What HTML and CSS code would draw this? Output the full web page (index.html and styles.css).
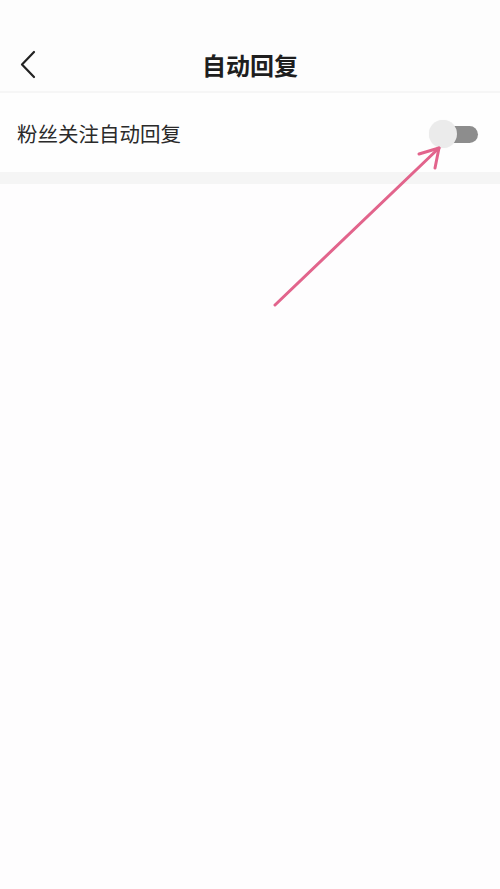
FILE: index.html
```html
<!DOCTYPE html>
<html lang="zh-CN">
  <head>
    <meta charset="UTF-8" />
    <meta name="viewport" content="width=device-width, initial-scale=1.0" />
    <title>自动回复</title>
    <link rel="stylesheet" href="styles.css">
  </head>

  <body>
    <header class="top-bar">
      <a class="back-btn" href="#">
        <svg width="24" height="34" viewBox="0 0 24 34">
          <path d="M16 4 L4 16.5 L16 29" fill="none" stroke="#222" stroke-width="2.2" stroke-linecap="round" stroke-linejoin="round" />
        </svg>
      </a>
      <h1 class="title">自动回复</h1>
    </header>

    <section class="setting-list">
      <div class="setting-row">
        <span class="setting-label">粉丝关注自动回复</span>
        <!-- 开关：关闭状态 -->
        <div class="switch">
          <span class="switch-track"></span>
          <span class="switch-knob"></span>
        </div>
      </div>
    </section>
    <div class="gap-band"></div>

    <!-- 提示箭头 -->
    <svg class="hint-arrow" width="500" height="320" viewBox="0 0 500 320">
      <g fill="none" stroke="#e2648c" stroke-width="3" stroke-linecap="round" stroke-linejoin="round">
        <path d="M275 305 L439 148" />
        <path d="M419 154 L439 148 L435 168" />
      </g>
    </svg>
  </body>
</html>
```

FILE: styles.css
```css
body {
  margin: 0;
  background: #fefdfe;
  font-family: "Noto Sans CJK SC", "Noto Sans", sans-serif;
  color: #222;
  position: relative;
  min-height: 889px;
}

.top-bar {
  height: 91px;
  display: flex;
  align-items: center;
  justify-content: center;
  position: relative;
  background: #fdfdfd;
  border-bottom: 2px solid #f6f6f6;
}

.back-btn {
  position: absolute;
  left: 18px;
  top: 48px;
  display: flex;
}

.title {
  margin: 0;
  margin-top: 38px;
  font-size: 24px;
  font-weight: 700;
  color: #1e1e1e;
  line-height: 1;
}

.setting-row {
  height: 79px;
  display: flex;
  align-items: center;
  justify-content: space-between;
  padding: 0 22px 0 17px;
  background: #fefefe;
}

.setting-label {
  font-size: 20.5px;
  color: #2a2a2a;
}

.switch {
  position: relative;
  width: 49px;
  height: 28px;
  margin-top: 3px;
}

.switch-track {
  position: absolute;
  left: 10px;
  top: 6px;
  width: 39px;
  height: 17px;
  border-radius: 9px;
  background: #8d8d8d;
}

.switch-knob {
  position: absolute;
  left: 0;
  top: 0;
  width: 28px;
  height: 28px;
  border-radius: 50%;
  background: #ebebeb;
  box-shadow: 0 0 1px rgba(0, 0, 0, 0.08);
}

.gap-band {
  height: 12px;
  background: #f5f5f5;
}

.hint-arrow {
  position: absolute;
  left: 0;
  top: 0;
  pointer-events: none;
}
```
